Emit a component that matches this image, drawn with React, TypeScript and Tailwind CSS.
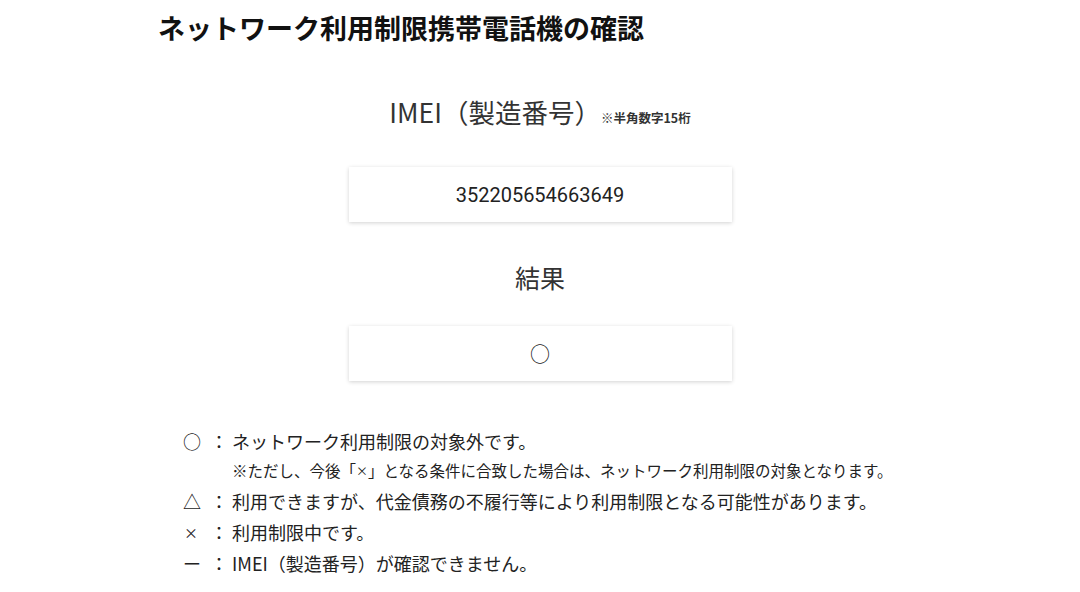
export default function App() {
  const legend = [
    { mark: "○", text: "ネットワーク利用制限の対象外です。" },
    { mark: "△", text: "利用できますが、代金債務の不履行等により利用制限となる可能性があります。" },
    { mark: "×", text: "利用制限中です。", small: true },
    { mark: "ー", text: "IMEI（製造番号）が確認できません。" },
  ];

  return (
    <div
      className="min-h-[592px] w-[1080px] bg-white text-[#222]"
      style={{ fontFamily: '"Noto Sans CJK JP", "Noto Sans", sans-serif' }}
    >
      <h1 className="pl-[158px] pt-[10px] text-[27px] font-bold leading-[36px] text-[#111]">
        ネットワーク利用制限携帯電話機の確認
      </h1>

      <div className="mt-[48px] flex items-end justify-center">
        <span className="text-[26.5px] leading-[36px] text-[#333]">IMEI（製造番号）</span>
        <span className="mb-[4px] text-[12.5px] font-bold leading-[16px] text-[#333]">※半角数字15桁</span>
      </div>

      <div className="mt-[37px] flex justify-center">
        <div
          className="flex h-[55px] w-[383px] items-center justify-center bg-white text-[20px] text-[#222] shadow-[0_1px_4px_rgba(0,0,0,0.18)]"
          style={{ fontFamily: "Roboto, sans-serif" }}
        >
          352205654663649
        </div>
      </div>

      <div className="mt-[38px] text-center text-[25px] leading-[34px] text-[#333]">結果</div>

      <div className="mt-[32px] flex justify-center">
        <div className="flex h-[55px] w-[383px] items-center justify-center bg-white text-[20px] text-[#222] shadow-[0_1px_4px_rgba(0,0,0,0.18)]">
          ○
        </div>
      </div>

      <div className="ml-[183px] mt-[46px] flex flex-col text-[18px] text-[#222]">
        <div className="flex h-[29px] items-center">
          <span className="w-[27px]">{legend[0].mark}</span>
          <span className="w-[22px]">：</span>
          <span>{legend[0].text}</span>
        </div>
        <div className="flex h-[30px] items-center pl-[49px] text-[15.5px]">
          ※ただし、今後「<span className="text-[12px]">×</span>」となる条件に合致した場合は、ネットワーク利用制限の対象となります。
        </div>
        {legend.slice(1).map((l) => (
          <div key={l.mark} className="flex h-[31px] items-center">
            <span className={l.small ? "w-[27px] pl-[1px] text-[14px]" : "w-[27px]"}>{l.mark}</span>
            <span className="w-[22px]">：</span>
            <span>{l.text}</span>
          </div>
        ))}
      </div>
    </div>
  );
}
